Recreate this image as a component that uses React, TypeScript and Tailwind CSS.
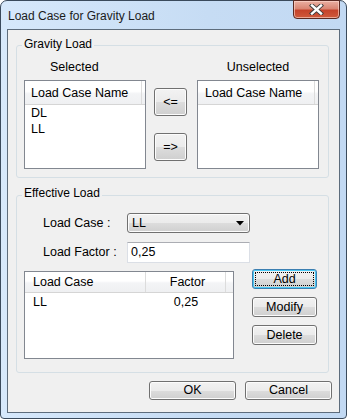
import React from "react";

const font = { fontFamily: '"Liberation Sans", Arial, sans-serif' };

const btn =
  "flex items-center justify-center rounded-[3px] border border-[#707070] bg-[linear-gradient(#f2f2f2_0%,#ebebeb_50%,#dddddd_50%,#cfcfcf_100%)] shadow-[inset_0_0_0_1px_#fcfcfc] text-[12.5px] leading-none text-black";

function Btn({ label, w, h }: { label: string; w: string; h: string }) {
  return <div className={`${btn} ${w} ${h}`}>{label}</div>;
}

export default function App() {
  return (
    <div style={font} className="w-[347px] h-[419px] overflow-hidden">
      <div className="w-[347px] h-[419px] flex flex-col border border-[#3a4a5c] rounded-t-[7px] rounded-b-[4px] bg-[linear-gradient(90deg,#d6e8fb_0%,#c6dcf4_60%,#c2d9f3_100%)]">
        {/* Title bar */}
        <div className="h-[28px] flex items-start shrink-0">
          <div className="flex-1 self-center pl-[7px] pt-[2px] text-[12px] text-[#1b1b1b]">
            Load Case for Gravity Load
          </div>
          <div className="-mt-[1px] mr-[6px] w-[47px] h-[19px] rounded-b-[4px] border border-[#5b2a22] bg-[linear-gradient(#eab0a2_0%,#d98673_45%,#c5432b_55%,#cf5a3c_100%)] shadow-[inset_0_0_0_1px_rgba(255,220,210,0.6)] flex items-center justify-center">
            <svg width="15" height="11" viewBox="0 0 15 11">
              <path d="M3 1.5 L12 9.5 M12 1.5 L3 9.5" stroke="#3b3b3b" strokeWidth="4.2" strokeLinecap="square" />
              <path d="M3 1.5 L12 9.5 M12 1.5 L3 9.5" stroke="#ffffff" strokeWidth="2.4" strokeLinecap="square" />
            </svg>
          </div>
        </div>
        {/* Client */}
        <div className="mx-[6px] mb-[5px] flex-1 border border-[#5d6c7c] bg-[#f0f0f0] flex flex-col">
          {/* Gravity Load group */}
          <div className="relative ml-[8px] mt-[15px] w-[313px] h-[133px] border border-[#d5dfe5] rounded-[3px] flex">
            <span className="absolute left-[5px] -top-[9px] px-[2px] bg-[#f0f0f0] text-[12px] leading-[14px] text-black">
              Gravity Load
            </span>
            <div className="pl-[7px] pt-[14px] flex flex-col">
              <div className="h-[14px] leading-[14px] text-[12.5px] pl-[26px] mb-[6px]">Selected</div>
              <div className="w-[122px] h-[89px] border border-[#828790] bg-white">
                <div className="flex h-[24px] border-b border-[#d5d5d5] bg-[linear-gradient(#ffffff_0%,#ffffff_45%,#f3f4f6_55%,#eff0f2_100%)]">
                  <div className="w-[117px] border-r border-[#dcdcdc] pl-[6px] text-[12.5px] leading-[24px]">Load Case Name</div>
                </div>
                <div className="pl-[6px] h-[16px] leading-[16px] text-[12.5px]">DL</div>
                <div className="pl-[6px] h-[16px] leading-[16px] text-[12.5px]">LL</div>
              </div>
            </div>
            <div className="ml-[8px] pt-[42px] flex flex-col gap-[17px]">
              <Btn label="<=" w="w-[33px]" h="h-[28px]" />
              <Btn label="=>" w="w-[33px]" h="h-[28px]" />
            </div>
            <div className="ml-[10px] pt-[14px] flex flex-col">
              <div className="h-[14px] leading-[14px] text-[12.5px] text-center mb-[6px]">Unselected</div>
              <div className="w-[122px] h-[89px] border border-[#828790] bg-white">
                <div className="flex h-[24px] border-b border-[#d5d5d5] bg-[linear-gradient(#ffffff_0%,#ffffff_45%,#f3f4f6_55%,#eff0f2_100%)]">
                  <div className="w-[117px] border-r border-[#dcdcdc] pl-[7px] text-[12.5px] leading-[24px]">Load Case Name</div>
                </div>
              </div>
            </div>
          </div>

          {/* Effective Load group */}
          <div className="relative ml-[8px] mt-[17px] w-[313px] h-[178px] border border-[#d5dfe5] rounded-[3px] flex flex-col">
            <span className="absolute left-[5px] -top-[10px] px-[2px] bg-[#f0f0f0] text-[12px] leading-[14px] text-black">
              Effective Load
            </span>
            <div className="flex items-center pl-[26px] mt-[17px]">
              <div className="w-[84px] text-[12.5px]">Load Case :</div>
              <div className="w-[123px] h-[20px] rounded-[3px] border border-[#707070] bg-[linear-gradient(#f2f2f2_0%,#ebebeb_50%,#dddddd_50%,#cfcfcf_100%)] shadow-[inset_0_0_0_1px_#fcfcfc] flex items-center pl-[4px] pr-[5px]">
                <span className="flex-1 text-[12.5px] leading-none">LL</span>
                <svg width="8" height="5" viewBox="0 0 8 5">
                  <path d="M0 0 H8 L4 4.5 Z" fill="#000" />
                </svg>
              </div>
            </div>
            <div className="flex items-center pl-[26px] mt-[9px]">
              <div className="w-[84px] text-[12.5px]">Load Factor :</div>
              <div className="w-[123px] h-[21px] border border-[#dbdfe6] border-t-[#abadb3] bg-white flex items-center pl-[3px] text-[12.5px]">
                0,25
              </div>
            </div>
            <div className="flex items-start pl-[7px] mt-[8px]">
              <div className="w-[210px] h-[88px] border border-[#828790] bg-white">
                <div className="flex h-[21px] border-b border-[#d5d5d5] bg-[linear-gradient(#ffffff_0%,#ffffff_45%,#f3f4f6_55%,#eff0f2_100%)] text-[12.5px] leading-[21px]">
                  <div className="w-[121px] border-r border-[#dcdcdc] pl-[8px]">Load Case</div>
                  <div className="w-[80px] border-r border-[#dcdcdc] text-center pl-[4px]">Factor</div>
                </div>
                <div className="flex h-[19px] leading-[19px] text-[12.5px]">
                  <div className="w-[121px] pl-[8px]">LL</div>
                  <div className="w-[80px] text-center">0,25</div>
                </div>
              </div>
              <div className="ml-[18px] -mt-[2px] flex flex-col gap-[8px]">
                <div className="w-[65px] h-[20px] rounded-[3px] border border-[#3c7fb1] bg-[linear-gradient(#f2f2f2_0%,#ebebeb_50%,#dddddd_50%,#cfcfcf_100%)] shadow-[inset_0_0_0_1px_#48c8f5] p-[2px] flex">
                  <div className="flex-1 border border-dotted border-black flex items-center justify-center text-[12.5px] leading-none">
                    Add
                  </div>
                </div>
                <Btn label="Modify" w="w-[65px]" h="h-[20px]" />
                <Btn label="Delete" w="w-[65px]" h="h-[20px]" />
              </div>
            </div>
          </div>

          {/* OK / Cancel */}
          <div className="flex ml-[141px] mt-[8px] gap-[9px]">
            <Btn label="OK" w="w-[87px]" h="h-[19px]" />
            <Btn label="Cancel" w="w-[87px]" h="h-[19px]" />
          </div>
        </div>
      </div>
    </div>
  );
}
